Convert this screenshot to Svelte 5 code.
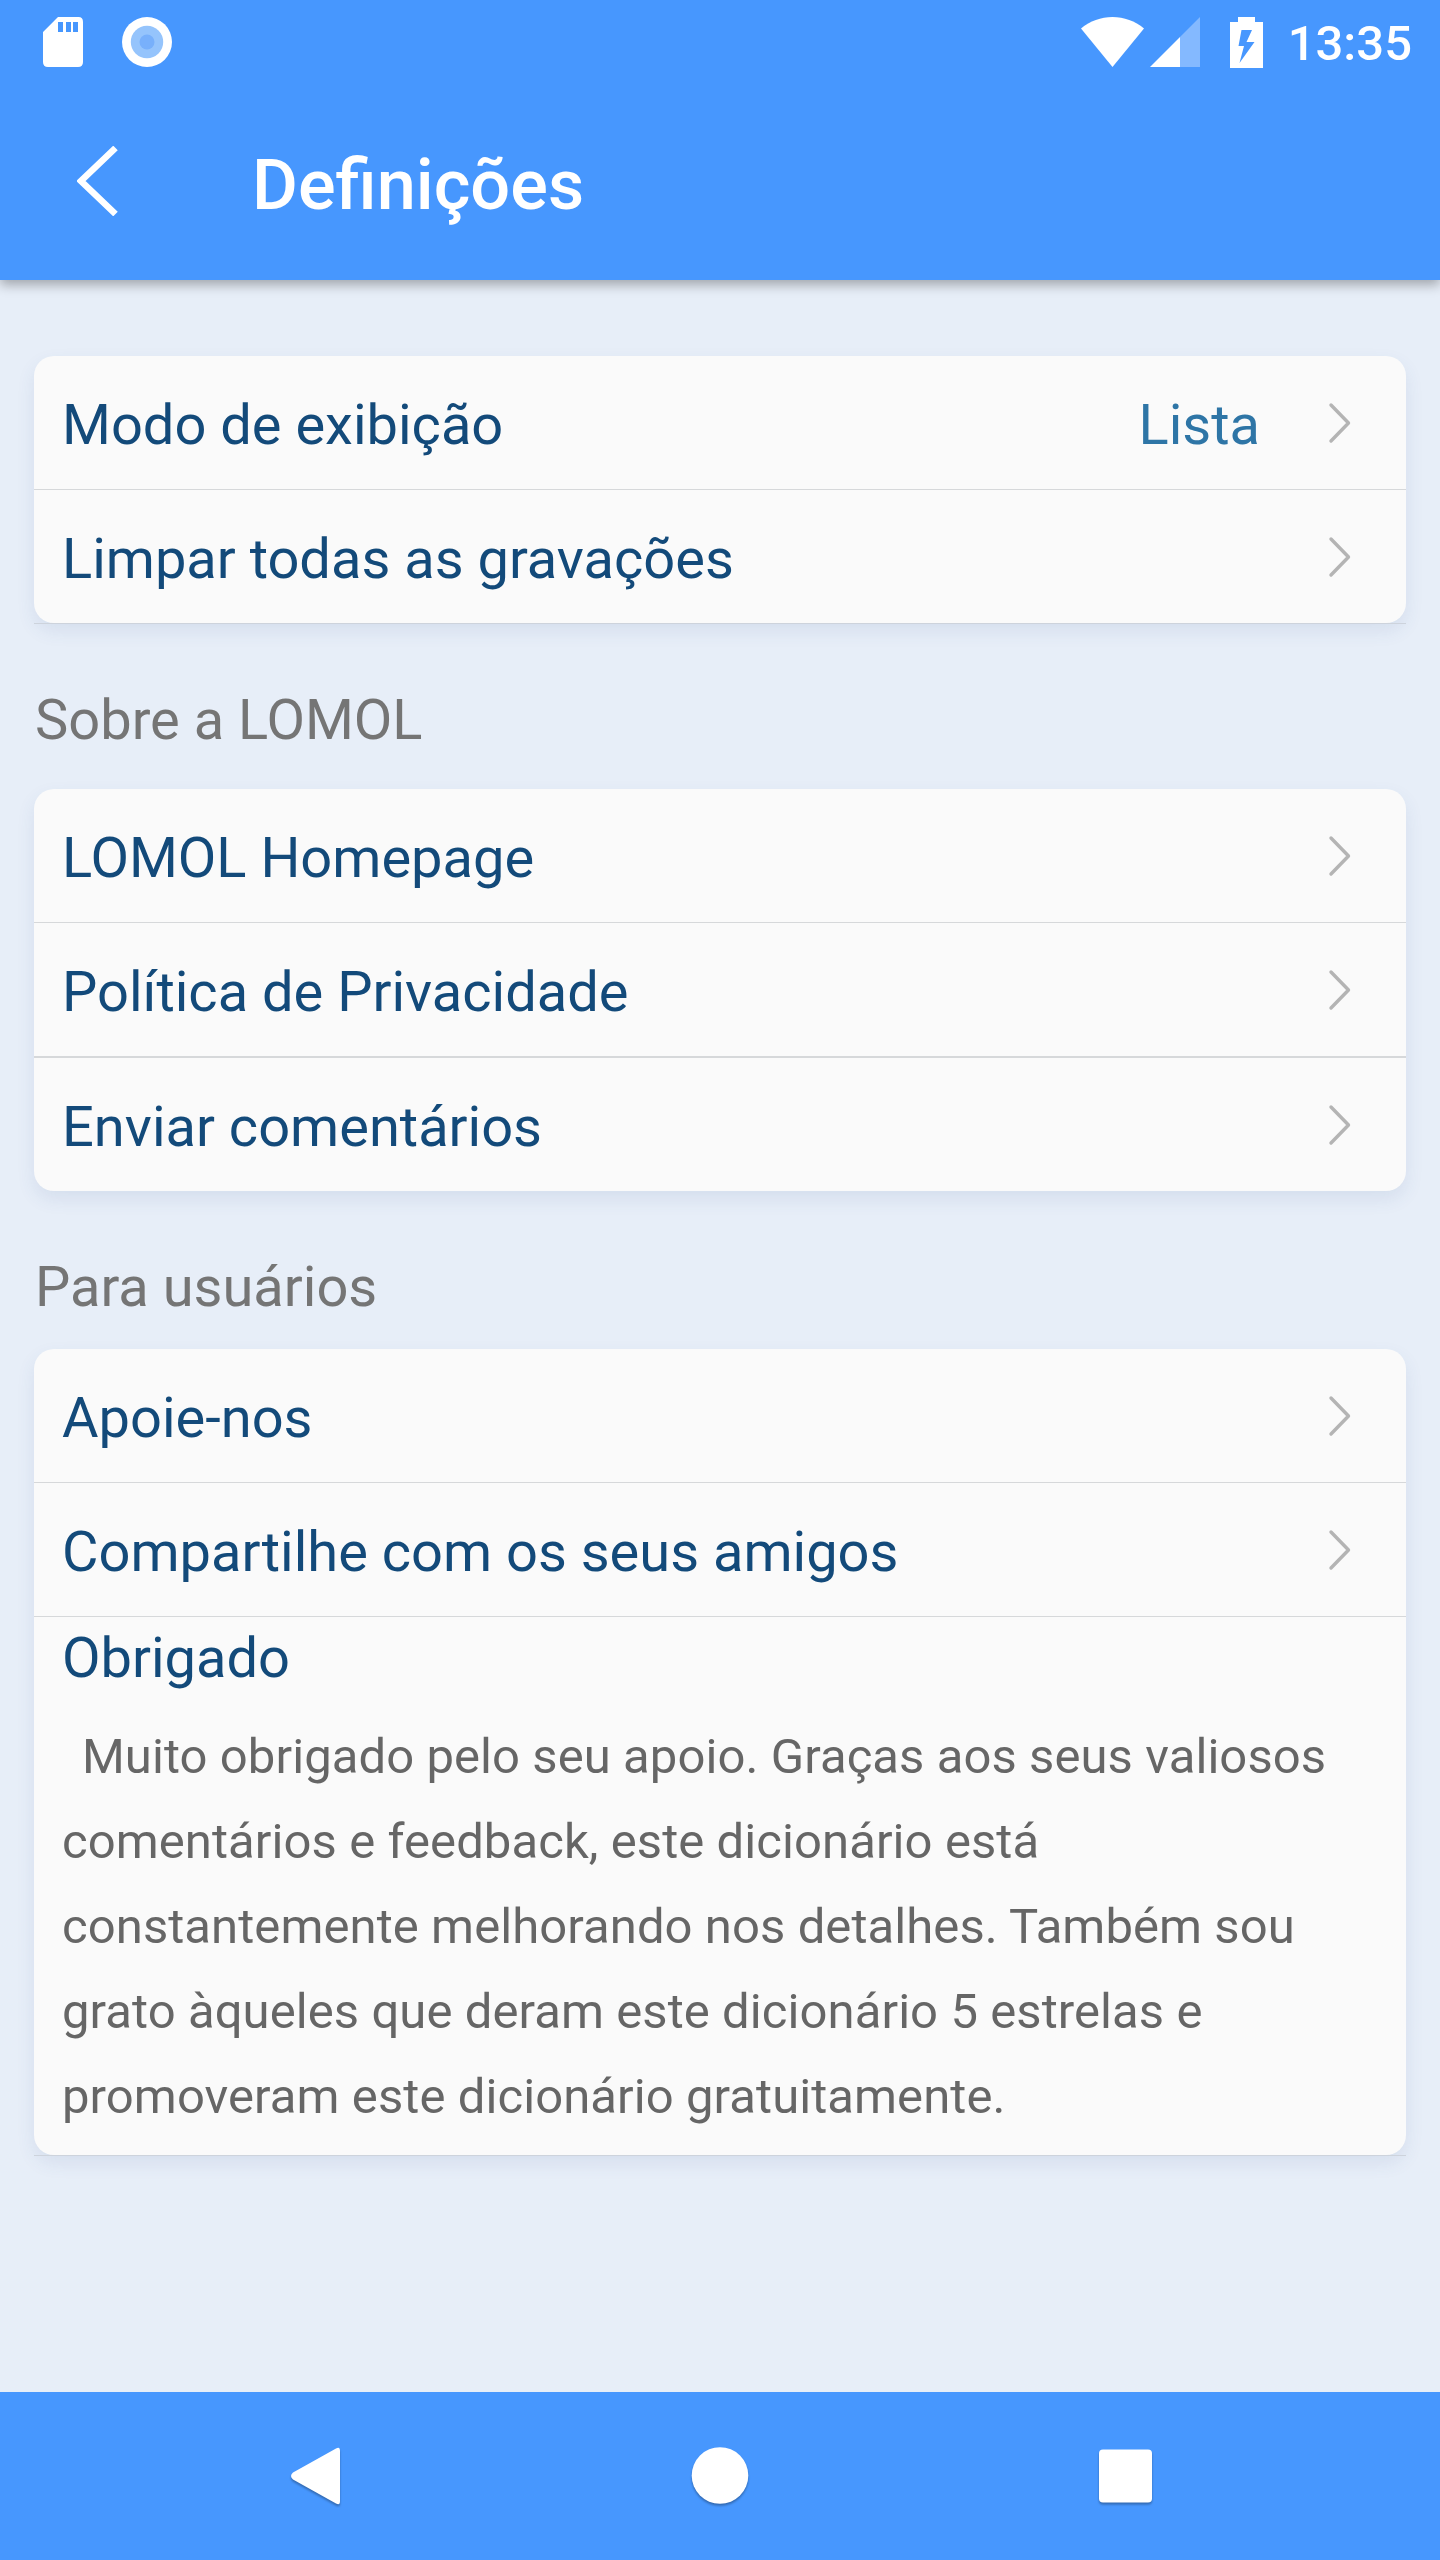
<script lang="ts">
  type Row = { label: string; value?: string; thick?: boolean };

  const display: Row[] = [
    { label: 'Modo de exibição', value: 'Lista' },
    { label: 'Limpar todas as gravações' }
  ];

  const about: Row[] = [
    { label: 'LOMOL Homepage' },
    { label: 'Política de Privacidade', thick: true },
    { label: 'Enviar comentários' }
  ];

  const users: Row[] = [
    { label: 'Apoie-nos' },
    { label: 'Compartilhe com os seus amigos' }
  ];
</script>

{#snippet row(item: Row)}
  <li class="row" class:thick={item.thick}>
    <span class="label">{item.label}</span>
    {#if item.value}
      <span class="value">{item.value}</span>
    {/if}
    <svg class="chevron" width="24" height="44" viewBox="0 0 24 44">
      <path d="M3 4 L20.5 22 L3 40" />
    </svg>
  </li>
{/snippet}

<div class="screen">
  <header>
    <div class="status">
      <svg width="40" height="50" viewBox="0 0 40 50">
        <path
          fill="#fff"
          fill-rule="evenodd"
          d="M15 0H35.5Q40 0 40 5V45Q40 50 35 50H5Q0 50 0 45V15ZM15 5V15H20V5ZM23 5V15H28V5ZM30 5V15H35V5Z"
        />
      </svg>
      <svg class="record" width="50" height="50" viewBox="0 0 50 50">
        <circle cx="25" cy="25" r="25" fill="#fff" />
        <circle cx="25" cy="25" r="16.2" fill="#95c4fc" />
        <circle cx="25" cy="25" r="7.5" fill="#78b0fb" />
      </svg>
      <span class="grow"></span>
      <svg width="63" height="50" viewBox="0 0 63 50">
        <path fill="#fff" d="M0 11.5C9 4 20 0 31.5 0S54 4 63 11.5L31.5 50Z" />
      </svg>
      <svg class="signal" width="50" height="50" viewBox="0 0 50 50">
        <path fill="#84b9ff" d="M50 0V50H30V20Z" />
        <path fill="#fff" d="M0 50L30 20V50Z" />
      </svg>
      <svg class="battery" width="33" height="51" viewBox="0 0 33 51">
        <path
          fill="#fff"
          fill-rule="evenodd"
          d="M8 0H25V5H33V51H0V5H8ZM11.5 13L8.5 29H14L9.5 46L24.5 25H16.5L22 13Z"
        />
      </svg>
      <span class="clock">13:35</span>
    </div>
    <div class="appbar">
      <svg class="back" width="42" height="70" viewBox="0 0 42 70">
        <path d="M38.5 2L4 35L38.5 68" />
      </svg>
      <h1>Definições</h1>
    </div>
  </header>

  <main>
    <ul class="card">
      {#each display as item (item.label)}
        {@render row(item)}
      {/each}
    </ul>
    <div class="rule"></div>

    <h2>Sobre a LOMOL</h2>
    <ul class="card">
      {#each about as item (item.label)}
        {@render row(item)}
      {/each}
    </ul>

    <h2 class="users">Para usuários</h2>
    <ul class="card">
      {#each users as item (item.label)}
        {@render row(item)}
      {/each}
      <li class="thanks">
        <h3>Obrigado</h3>
        <p>
          Muito obrigado pelo seu apoio. Graças aos seus valiosos comentários e
          feedback, este dicionário está constantemente melhorando nos detalhes.
          Também sou grato àqueles que deram este dicionário 5 estrelas e
          promoveram este dicionário gratuitamente.
        </p>
      </li>
    </ul>
    <div class="rule"></div>
  </main>

  <nav>
    <svg width="60" height="66" viewBox="0 0 60 66">
      <path d="M50 4.5Q54 2 54 7V57Q54 62 50 59.5L7 35.5Q3 32 7 28.5Z" />
    </svg>
    <svg width="60" height="66" viewBox="0 0 60 66">
      <circle cx="29" cy="31.5" r="28.3" />
    </svg>
    <svg width="60" height="66" viewBox="0 0 60 66">
      <rect x="3" y="5.5" width="53" height="53" rx="4" />
    </svg>
  </nav>
</div>

<style>
  :global(body) {
    margin: 0;
    background: #e7eef8;
  }
  .screen {
    display: flex;
    flex-direction: column;
    width: 1440px;
    height: 2560px;
    overflow: hidden;
    background: #e7eef8;
    font-family: Roboto, sans-serif;
    font-size: 56px;
    line-height: 66px;
  }
  svg {
    display: block;
    flex: none;
  }
  h1,
  h2,
  h3,
  p,
  ul {
    margin: 0;
    padding: 0;
    font-weight: 400;
    font-size: inherit;
    list-style: none;
  }

  header {
    height: 280px;
    flex: none;
    background: #4797fe;
    color: #fff;
    box-shadow: 0 5px 11px rgba(0, 0, 0, 0.3);
  }
  .status {
    display: flex;
    align-items: center;
    height: 84px;
    padding: 0 28px 0 43px;
  }
  .record {
    margin-left: 39px;
  }
  .grow {
    flex: 1;
  }
  .signal {
    margin-left: 6px;
  }
  .battery {
    margin-left: 30px;
    margin-right: 25px;
  }
  .clock {
    font-size: 49px;
    font-weight: 500;
    line-height: 58px;
    padding-top: 3px;
  }

  .appbar {
    display: flex;
    align-items: center;
    height: 196px;
    padding-left: 77px;
  }
  .back {
    margin-bottom: 2px;
  }
  .back path {
    fill: none;
    stroke: #fff;
    stroke-width: 6.5;
  }
  h1 {
    margin-left: 133px;
    padding-top: 6px;
    font-size: 70.3px;
    font-weight: 500;
    line-height: 82px;
  }

  main {
    flex: 1;
    padding: 76px 34px 0;
  }
  .card {
    background: #fafafa;
    border-radius: 20px;
    box-shadow: 0 8px 18px rgba(60, 90, 150, 0.1);
    color: #134a7a;
  }
  .rule {
    height: 1px;
    background: #cdd3dc;
  }
  .row {
    display: flex;
    align-items: center;
    height: 133px;
    padding: 0 54px 0 28px;
    border-bottom: 1px solid #d6d8da;
  }
  .row:last-child {
    border-bottom: 0;
  }
  .thick {
    border-bottom-width: 2px;
  }
  .label {
    flex: 1;
    padding-top: 4px;
  }
  .value {
    padding-top: 4px;
    margin-right: 68px;
    color: #2e75a6;
  }
  .chevron path {
    fill: none;
    stroke: #b4b4b4;
    stroke-width: 3.4;
    stroke-linecap: round;
    stroke-linejoin: round;
  }

  h2 {
    height: 66px;
    padding: 63px 1px 36px;
    color: #757575;
  }
  h2.users {
    padding-bottom: 29px;
  }

  .thanks {
    height: 538px;
    padding: 0 28px;
    box-sizing: border-box;
  }
  h3 {
    padding-top: 8px;
  }
  p {
    padding-top: 23px;
    font-size: 49px;
    line-height: 85px;
    letter-spacing: 0.08px;
    text-indent: 20px;
    color: #666;
  }

  nav {
    display: flex;
    flex: none;
    justify-content: space-between;
    height: 168px;
    padding: 52px 284px 0 286px;
    box-sizing: border-box;
    background: #4797fe;
  }
  nav svg {
    fill: #fff;
    filter: drop-shadow(0 2px 1px rgba(0, 0, 0, 0.3));
  }
</style>
